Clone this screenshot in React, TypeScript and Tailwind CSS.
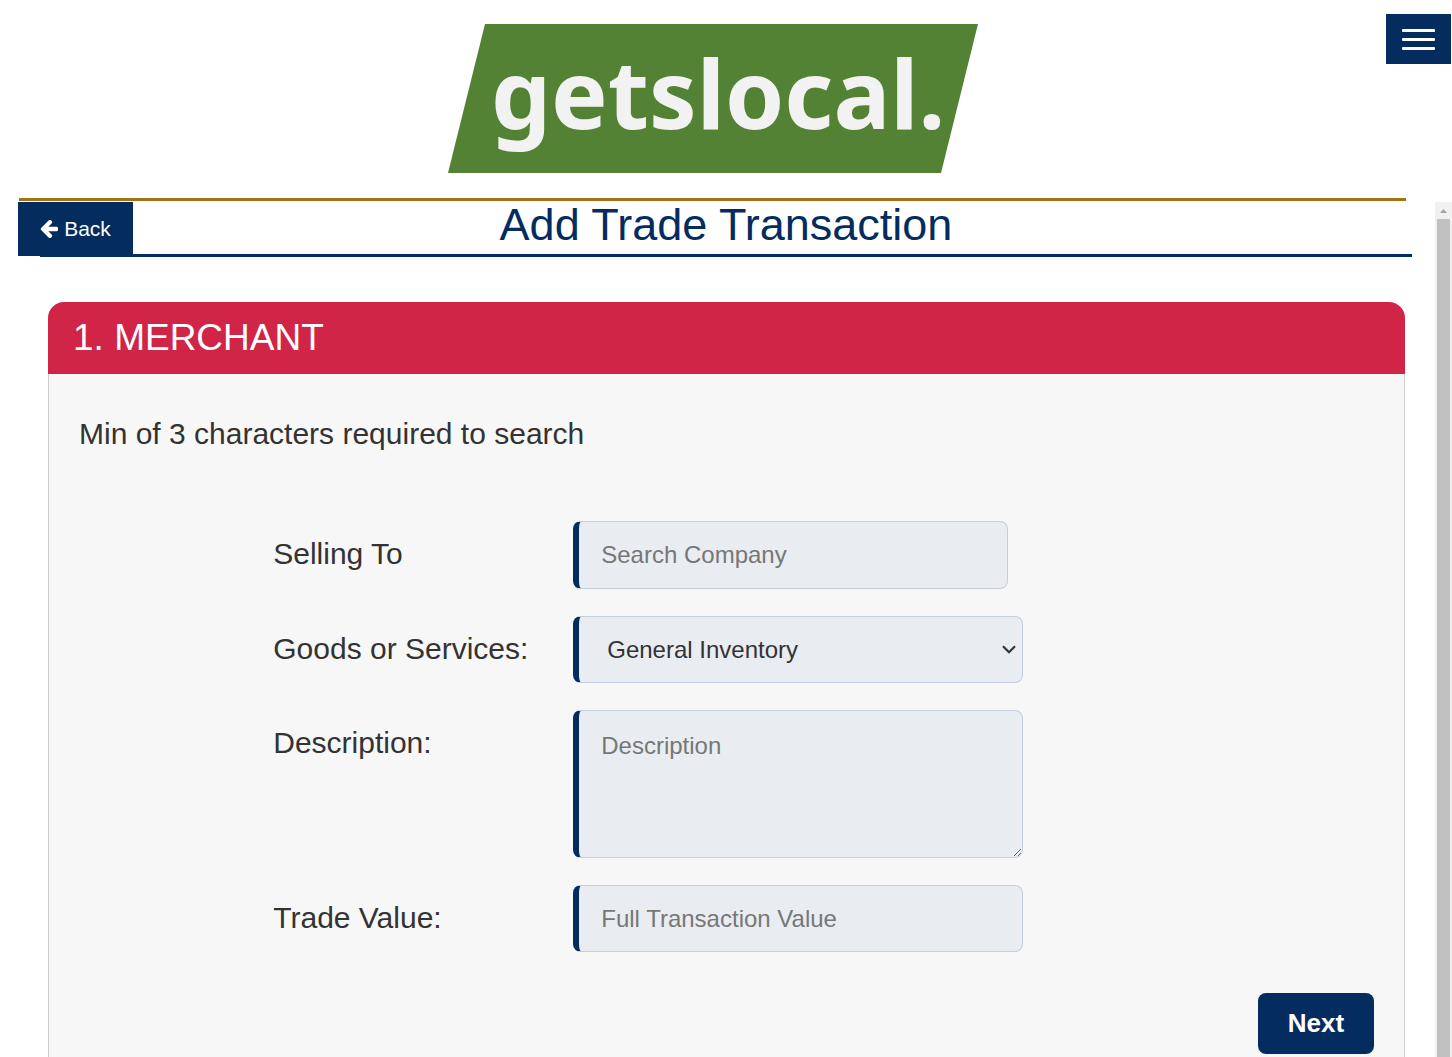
import { useState } from "react";
import type { ReactNode } from "react";

const fieldClass =
  "block w-full rounded-lg border border-l-[6px] border-[#c3cede] border-l-[#042c5f] bg-[#e9edf2] text-2xl text-[#333] placeholder:text-[#777] placeholder:opacity-100 focus:outline-none";

function Logo() {
  return (
    <svg
      width="530"
      height="149"
      viewBox="0 0 530 149"
      role="img"
      aria-label="getslocal."
    >
      <polygon points="37,0 530,0 493,149 0,149" fill="#538234" />
      <text
        x="43"
        y="105"
        fontSize="95"
        fontWeight="700"
        fill="#f2f2f2"
        className="font-['Noto_Sans',sans-serif]"
      >
        getslocal.
      </text>
    </svg>
  );
}

function ArrowLeftIcon() {
  return (
    <svg
      width="18"
      height="18"
      viewBox="0 0 1536 1536"
      fill="currentColor"
      aria-hidden="true"
    >
      <path d="M1536 704v128q0 53-32.5 90.5t-84.5 37.5h-704l293 294q38 36 38 90t-38 90l-75 76q-37 37-90 37-52 0-91-37l-651-652q-37-37-37-90 0-52 37-91l651-650q38-38 91-38 52 0 90 38l75 74q38 38 38 91t-38 91l-293 293h704q52 0 84.500 37.500t32.500 90.500z" />
    </svg>
  );
}

function MenuButton() {
  return (
    <button
      type="button"
      aria-label="Menu"
      className="flex h-[50px] w-[65px] flex-col items-center justify-center gap-1.5 bg-[#042c5f]"
    >
      <span className="h-[3px] w-[33px] rounded-[1px] bg-white" />
      <span className="h-[3px] w-[33px] rounded-[1px] bg-white" />
      <span className="h-[3px] w-[33px] rounded-[1px] bg-white" />
    </button>
  );
}

function Scrollbar() {
  return (
    <div className="flex w-[17px] shrink-0 flex-col items-center bg-[#f1f1f1]">
      <div className="flex h-[17px] shrink-0 items-center justify-center">
        <svg width="7" height="4" viewBox="0 0 7 4">
          <path d="M3.5 0 L7 4 H0 Z" fill="#a3a3a3" />
        </svg>
      </div>
      <div className="w-[13px] flex-1 bg-[#c1c1c1]" />
    </div>
  );
}

interface FieldProps {
  id: string;
  label: string;
  children: ReactNode;
}

function Field({ id, label, children }: FieldProps) {
  return (
    <div className="flex items-start">
      <label
        htmlFor={id}
        className="w-[300px] shrink-0 text-[30px] leading-[66px]"
      >
        {label}
      </label>
      <div className="relative w-[450px]">{children}</div>
    </div>
  );
}

function App() {
  const [company, setCompany] = useState("");
  const [category, setCategory] = useState("General Inventory");
  const [description, setDescription] = useState("");
  const [value, setValue] = useState("");

  return (
    <div className="flex h-screen flex-col overflow-hidden bg-white font-['Liberation_Sans',Arial,sans-serif] text-[#333]">
      <header className="shrink-0">
        <div className="flex h-[198px] items-start pr-px">
          <div className="flex-1" />
          <a href="#" className="mt-6 mr-[26px]">
            <Logo />
          </a>
          <div className="mt-3.5 flex flex-1 justify-end">
            <MenuButton />
          </div>
        </div>
        <div className="mr-[46px] mb-px ml-[19px] h-[3px] bg-[#a07415]" />
      </header>

      <div className="flex min-h-0 flex-1">
        <main className="min-w-0 flex-1">
          <div className="relative mr-[23px] ml-10 h-[55px] border-b-[3px] border-[#042c5f]">
            <h1 className="text-center text-[45px] leading-[46px] text-[#042c5f]">
              Add Trade Transaction
            </h1>
            <a
              href="#"
              className="absolute top-0 -left-[22px] flex h-[54px] w-[115px] items-center justify-center gap-1.5 bg-[#042c5f] text-[21px] text-white"
            >
              <ArrowLeftIcon />
              Back
            </a>
          </div>

          <section className="mt-[45px] mr-[30px] ml-12">
            <h2 className="h-[72px] rounded-t-2xl bg-[#d02546] px-[25px] text-[37px] leading-[72px] text-white">
              1. MERCHANT
            </h2>
            <form
              className="border-x border-[#ccc] bg-[#f7f7f7] px-[30px] pt-10 pb-20"
              onSubmit={(e) => e.preventDefault()}
            >
              <p className="text-[30px] leading-10">
                Min of 3 characters required to search
              </p>
              <div className="mt-[67px] ml-[15%] flex flex-col gap-[27px]">
                <Field id="company" label="Selling To">
                  <input
                    id="company"
                    type="text"
                    placeholder="Search Company"
                    value={company}
                    onChange={(e) => setCompany(e.target.value)}
                    className={`${fieldClass} h-[68px] max-w-[435px] px-[22px]`}
                  />
                </Field>
                <Field id="category" label="Goods or Services:">
                  <select
                    id="category"
                    value={category}
                    onChange={(e) => setCategory(e.target.value)}
                    className={`${fieldClass} h-[67px] appearance-none px-7`}
                  >
                    <option>General Inventory</option>
                  </select>
                  <svg
                    width="14"
                    height="9"
                    viewBox="0 0 14 9"
                    className="pointer-events-none absolute top-[29px] right-[7px]"
                    fill="none"
                    stroke="#333"
                    strokeWidth="2.2"
                    aria-hidden="true"
                  >
                    <path d="M1 1.200 L7 7.200 L13 1.200" />
                  </svg>
                </Field>
                <Field id="description" label="Description:">
                  <textarea
                    id="description"
                    placeholder="Description"
                    value={description}
                    onChange={(e) => setDescription(e.target.value)}
                    className={`${fieldClass} h-[148px] resize px-[22px] py-[19px]`}
                  />
                </Field>
                <Field id="value" label="Trade Value:">
                  <input
                    id="value"
                    type="text"
                    placeholder="Full Transaction Value"
                    value={value}
                    onChange={(e) => setValue(e.target.value)}
                    className={`${fieldClass} h-[67px] px-[22px]`}
                  />
                </Field>
              </div>
              <div className="mt-[41px] flex justify-end">
                <button
                  type="submit"
                  className="h-[61px] w-[116px] rounded-lg bg-[#042c5f] text-[26px] font-bold text-white"
                >
                  Next
                </button>
              </div>
            </form>
          </section>
        </main>
        <Scrollbar />
      </div>
    </div>
  );
}

export default App;
